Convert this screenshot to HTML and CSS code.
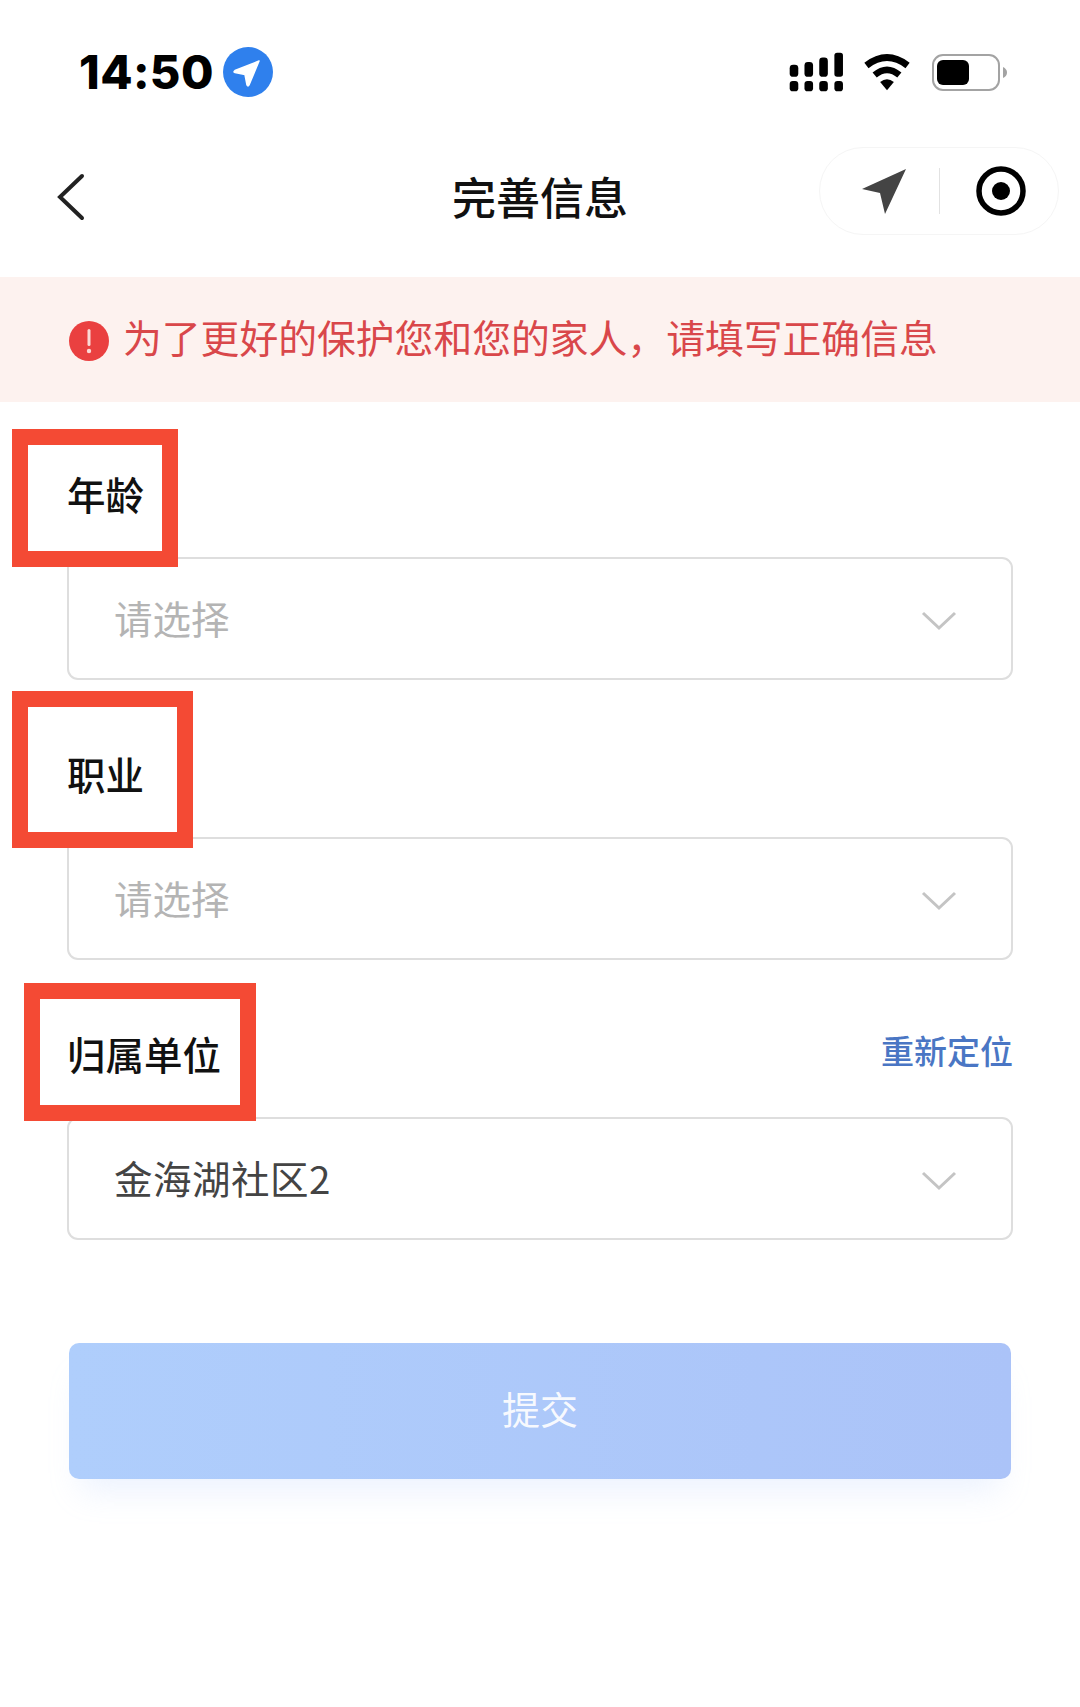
FILE: index.html
```html
<!DOCTYPE html>
<html lang="zh-CN">
<head>
    <meta charset="UTF-8">
    <title>完善信息</title>
    <link rel="stylesheet" href="styles.css">
</head>
<body>
    <div class="status-bar">
        <div class="status-left">
            <span class="time">14:50</span>
            <svg class="loc-badge" viewBox="0 0 50 50">
                <circle cx="25" cy="25" r="25" fill="#2f80ed"/>
                <path d="M36 14 L12 23.500 Q10 25 12 25.500 L22 27.500 L24 38 Q25 40 26 38 Z" fill="#fff" stroke="#fff" stroke-width="1.500" stroke-linejoin="round"/>
            </svg>
        </div>
        <div class="status-right">
            <svg class="signal" viewBox="725 156 160 116">
                <rect x="727" y="240" width="25" height="30" rx="9"/>
                <rect x="770" y="240" width="25" height="30" rx="9"/>
                <rect x="813" y="240" width="25" height="30" rx="9"/>
                <rect x="857" y="240" width="25" height="30" rx="9"/>
                <rect x="727" y="193" width="25" height="35" rx="10"/>
                <rect x="770" y="185" width="25" height="43" rx="10"/>
                <rect x="813" y="172" width="25" height="56" rx="10"/>
                <rect x="857" y="158" width="25" height="70" rx="8"/>
            </svg>
            <svg class="wifi" viewBox="940 160 140 110">
                <path d="M950 196 Q1010 150 1070 196" fill="none" stroke="#000" stroke-width="20"/>
                <path d="M974 224 Q1010 194 1046 224" fill="none" stroke="#000" stroke-width="19"/>
                <path d="M990 244 Q1010 228 1030 244 L1010 268 Z"/>
            </svg>
            <svg class="battery" viewBox="0 0 75 37">
                <rect x="1" y="1" width="66" height="35" rx="10" fill="#fff" stroke="#a3a3a3" stroke-width="2"/>
                <rect x="5" y="6" width="32" height="25" rx="6"/>
                <path d="M71 13 Q75 15 75 18.500 Q75 22 71 24 Z" fill="#a3a3a3"/>
            </svg>
        </div>
    </div>

    <div class="nav-bar">
        <svg class="back" viewBox="0 0 28 48">
            <path d="M25 3 L3 24 L25 45" fill="none" stroke="#222" stroke-width="4" stroke-linecap="round"/>
        </svg>
        <h1 class="nav-title">完善信息</h1>
        <div class="capsule">
            <svg class="capsule-arrow" viewBox="0 0 46 46">
                <path d="M45 1 L1 21 L19 25 L24 46 Z" fill="#444"/>
            </svg>
            <span class="capsule-line"></span>
            <svg class="capsule-target" viewBox="0 0 50 50">
                <circle cx="25" cy="25" r="22" fill="none" stroke="#000" stroke-width="5.500"/>
                <circle cx="25" cy="25" r="9"/>
            </svg>
        </div>
    </div>

    <div class="notice">
        <svg class="notice-icon" viewBox="0 0 40 40">
            <circle cx="20" cy="20" r="20" fill="#ea4040"/>
            <rect x="18.500" y="8" width="3" height="17" rx="1.500" fill="#fbd9d6"/>
            <circle cx="20" cy="30" r="2.200" fill="#fbd9d6"/>
        </svg>
        <span class="notice-text">为了更好的保护您和您的家人，请填写正确信息</span>
    </div>

    <div class="form">
        <div class="field">
            <div class="mark mark-age"></div>
            <div class="field-label"><span>年龄</span></div>
            <div class="select">
                <span class="placeholder">请选择</span>
                <svg class="chevron" viewBox="0 0 36 20"><path d="M2 2 L18 17 L34 2" fill="none" stroke="#c4c4c4" stroke-width="3"/></svg>
            </div>
        </div>
        <div class="field">
            <div class="mark mark-job"></div>
            <div class="field-label"><span>职业</span></div>
            <div class="select">
                <span class="placeholder">请选择</span>
                <svg class="chevron" viewBox="0 0 36 20"><path d="M2 2 L18 17 L34 2" fill="none" stroke="#c4c4c4" stroke-width="3"/></svg>
            </div>
        </div>
        <div class="field">
            <div class="mark mark-unit"></div>
            <div class="field-label">
                <span>归属单位</span>
                <a class="relocate" href="#">重新定位</a>
            </div>
            <div class="select">
                <span class="value">金海湖社区2</span>
                <svg class="chevron" viewBox="0 0 36 20"><path d="M2 2 L18 17 L34 2" fill="none" stroke="#c4c4c4" stroke-width="3"/></svg>
            </div>
        </div>
        <button class="submit">提交</button>
    </div>
</body>
</html>
```

FILE: styles.css
```css
* {
    margin: 0;
    padding: 0;
    box-sizing: border-box;
}

body {
    width: 1080px;
    height: 1707px;
    overflow: hidden;
    background: #fff;
    font-family: "Noto Sans CJK SC", "Noto Sans", sans-serif;
}

.status-bar {
    height: 144px;
    display: flex;
    justify-content: space-between;
    align-items: center;
    padding: 0 73px 0 79px;
}

.status-left {
    display: flex;
    align-items: center;
    gap: 9px;
}

.time {
    font-family: Inter, "Liberation Sans", sans-serif;
    font-weight: 800;
    font-size: 47px;
    letter-spacing: 0.4px;
    line-height: 50px;
    color: #000;
}

.loc-badge {
    width: 50px;
    height: 50px;
}

.status-right {
    display: flex;
    align-items: center;
}

.signal {
    width: 55px;
    height: 40px;
    margin-right: 19px;
}

.wifi {
    width: 48px;
    height: 38px;
    margin-right: 21px;
}

.battery {
    width: 75px;
    height: 37px;
}

.nav-bar {
    height: 133px;
    display: grid;
    grid-template-columns: 1fr auto 1fr;
    align-items: center;
    padding: 0 21px 27px 21px;
}

.back {
    width: 28px;
    height: 48px;
    margin-left: 36px;
}

.nav-title {
    font-size: 44px;
    font-weight: 500;
    color: #111;
    line-height: 60px;
    margin-bottom: 3px;
}

.capsule {
    justify-self: end;
    width: 240px;
    height: 88px;
    margin-bottom: 12px;
    border: 1px solid #f5f5f5;
    border-radius: 44px;
    display: flex;
    align-items: center;
    padding-left: 41px;
}

.capsule-arrow {
    width: 46px;
    height: 46px;
}

.capsule-line {
    width: 1px;
    height: 46px;
    background: #e2e2e2;
    margin: 0 36px 0 32px;
}

.capsule-target {
    width: 50px;
    height: 50px;
}

.notice {
    height: 125px;
    background: #fdf2ef;
    display: flex;
    align-items: center;
    gap: 14px;
    padding-left: 69px;
    font-size: 38.800px;
    color: #d9474a;
}

.notice-text {
    margin-bottom: 8px;
}

.notice-icon {
    width: 40px;
    height: 40px;
    flex-shrink: 0;
    margin-top: 2px;
}

.form {
    padding: 0 67px;
}

.field {
    position: relative;
}

.field-label {
    height: 157px;
    padding-bottom: 40px;
    display: flex;
    justify-content: space-between;
    align-items: flex-end;
    font-size: 38.500px;
    font-weight: 500;
    line-height: 48px;
    color: #111;
}

.field:first-child .field-label {
    height: 155px;
}

.relocate {
    font-size: 33px;
    font-weight: 500;
    color: #4a76c4;
    text-decoration: none;
    line-height: 44px;
    margin-bottom: 5px;
}

.select {
    height: 123px;
    border: 2px solid #dedede;
    border-radius: 11px;
    display: flex;
    justify-content: space-between;
    align-items: center;
    padding: 0 54px 3px 45px;
    font-size: 38.500px;
}

.placeholder {
    color: #b4b4b4;
}

.value {
    color: #444;
    letter-spacing: 0.5px;
}

.chevron {
    width: 36px;
    height: 20px;
    margin-top: 7px;
}

/* red annotation boxes drawn over the form */
.mark {
    position: absolute;
    border: 16px solid #f44a34;
    z-index: 1;
}

.mark-age {
    left: -55px;
    top: 27px;
    width: 166px;
    height: 138px;
}

.mark-job {
    left: -55px;
    top: 11px;
    width: 181px;
    height: 157px;
}

.mark-unit {
    left: -43px;
    top: 23px;
    width: 232px;
    height: 138px;
}

.submit {
    display: block;
    width: 942px;
    height: 136px;
    margin: 103px 0 0 2px;
    padding-bottom: 8px;
    border: none;
    border-radius: 10px;
    background: linear-gradient(90deg, #afcefc, #abc3f8);
    box-shadow: 0 24px 30px -12px rgba(170, 195, 250, 0.22);
    font-family: inherit;
    font-size: 38px;
    color: rgba(255, 255, 255, 0.92);
}
```
